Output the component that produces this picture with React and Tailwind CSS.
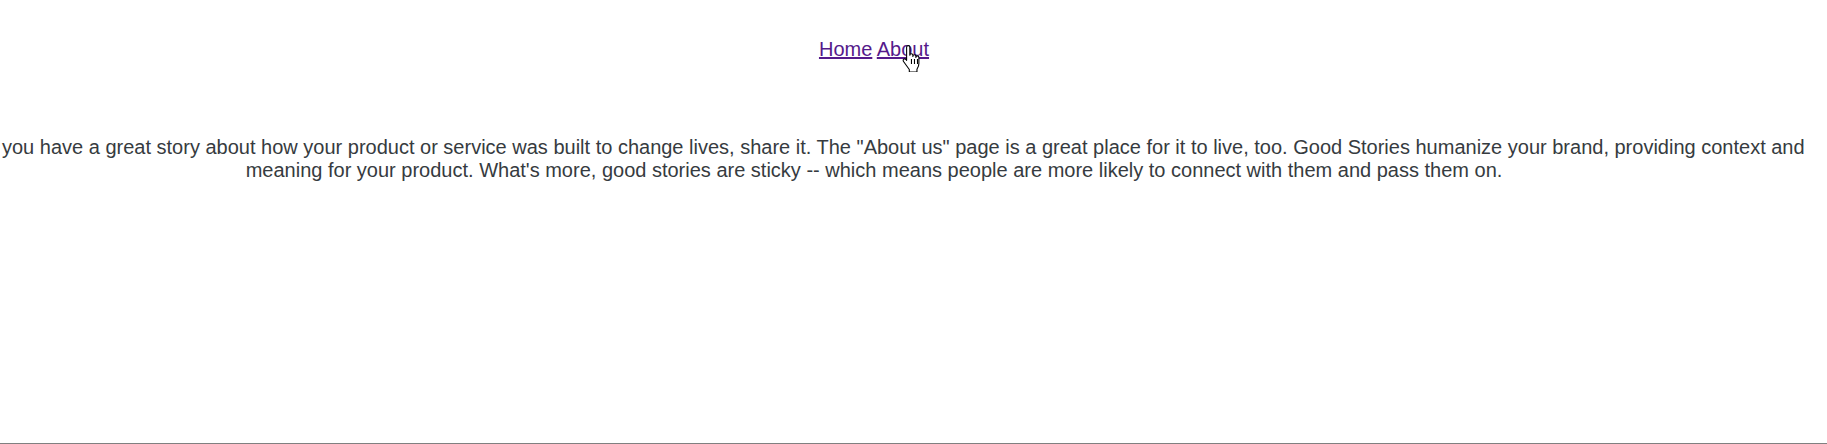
import React from "react";

function HandCursor() {
  return (
    <svg
      className="absolute left-[901px] top-[44px]"
      width="22"
      height="28"
      viewBox="0 0 20 26"
    >
      <path
        d="M6.5 1.5c1 0 1.5.6 1.5 1.6v7.4c0-1 .6-1.5 1.4-1.5s1.4.5 1.4 1.5v1c0-1 .6-1.5 1.4-1.5s1.4.5 1.4 1.5v1c0-1 .6-1.5 1.4-1.5s1.4.5 1.4 1.5v5.5c0 2.5-.8 3.7-1.8 5.5v2.5H7.5v-2.3L2.3 16.5c-.7-.8-.7-1.9 0-2.4.7-.5 1.6-.3 2.3.5L5 15.2V3.1c0-1 .5-1.6 1.5-1.6z"
        fill="#fff"
        stroke="#000"
        strokeWidth="1"
        strokeLinejoin="round"
      />
      <path d="M9.5 14v4.5M12.3 14v4.5M15.1 14v4.5" stroke="#000" strokeWidth="1" />
    </svg>
  );
}

export default function App() {
  return (
    <div className="relative h-[444px] w-full overflow-hidden bg-white border-b border-[#808080] font-['Liberation_Sans',Arial,sans-serif]">
      <nav className="pt-[38px] pr-[79px] text-center text-[20px] leading-[23px]">
        <a href="#" className="text-[#551a8b] underline">Home</a>{" "}
        <a href="#" className="text-[#551a8b] underline">About</a>
      </nav>
      <p className="mt-[75px] text-[20px] leading-[23px] text-[#363b40]">
        <span className="block whitespace-nowrap pl-[2px] text-left">
          you have a great story about how your product or service was built to change lives, share it. The "About us" page is a great place for it to live, too. Good Stories humanize your brand, providing context and
        </span>{" "}
        <span className="block pr-[79px] text-center">
          meaning for your product. What's more, good stories are sticky -- which means people are more likely to connect with them and pass them on.
        </span>
      </p>
      <HandCursor />
    </div>
  );
}
